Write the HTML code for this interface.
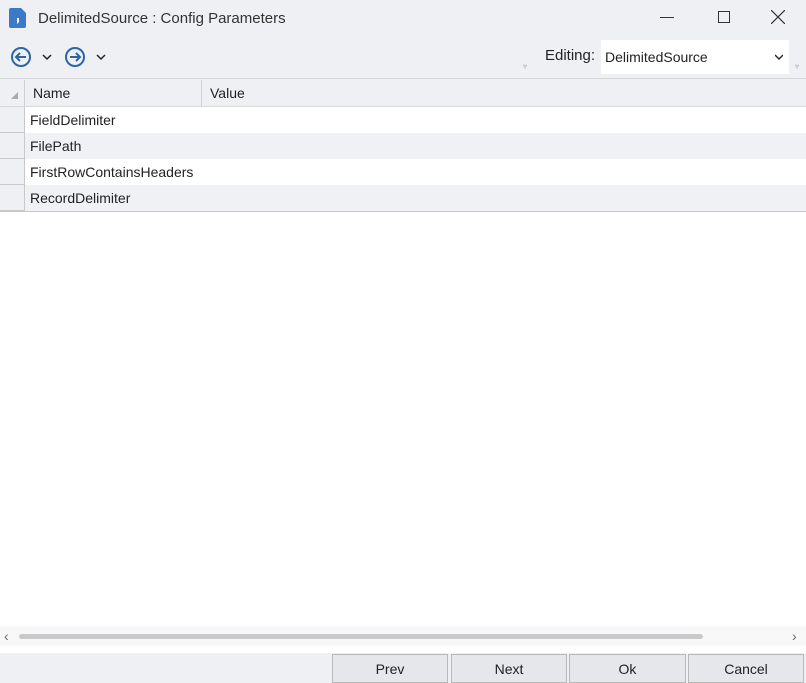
<!DOCTYPE html>
<html><head><style>
*{margin:0;padding:0;box-sizing:border-box}
body{width:806px;height:683px;background:#fff;font-family:"Liberation Sans",sans-serif;font-size:14px;color:#222;position:relative;overflow:hidden}
.abs{position:absolute}
.top{left:0;top:0;width:806px;height:79px;background:#eef0f3;border-bottom:1px solid #d4d6da}
.hdr{left:0;top:79px;width:806px;height:28px;background:#eef0f3;border-bottom:1px solid #d8d8d8}
.row{left:0;width:806px;height:26px;line-height:26px}
.rh{position:absolute;left:0;top:0;width:25px;height:26px;background:#eef0f3;border-right:1px solid #c8c8c8;border-bottom:1px solid #c8c8c8}
.row span{position:absolute;left:30px}
.btn{top:654px;height:29px;background:#e6e7ea;border:1px solid #b8b8b8;text-align:center;line-height:28px;font-size:14px}
</style></head><body>
<div class="abs top"></div>
<svg class="abs" style="left:9px;top:8px" width="18" height="20"><path d="M2 0h10l5 5v13a2 2 0 0 1-2 2H2a2 2 0 0 1-2-2V2a2 2 0 0 1 2-2z" fill="#3a7ac8"/><path d="M8 10h2v4l-2 2z" fill="#fff"/></svg>
<div class="abs" style="left:38px;top:10px;font-size:15px;color:#333">DelimitedSource : Config Parameters</div>
<div class="abs" style="left:660px;top:17px;width:14px;height:1px;background:#333"></div>
<div class="abs" style="left:718px;top:11px;width:12px;height:12px;border:1px solid #333"></div>
<svg class="abs" style="left:771px;top:10px" width="14" height="14"><path d="M0 0L14 14M14 0L0 14" stroke="#333" stroke-width="1.2"/></svg>
<svg class="abs" style="left:10px;top:46px" width="100" height="22"><circle cx="11" cy="11" r="9" fill="none" stroke="#2e64a8" stroke-width="2"/><path d="M16 11H7M10 7l-4 4 4 4" fill="none" stroke="#2e64a8" stroke-width="2"/><path d="M33 9l4 4 4-4" fill="none" stroke="#222" stroke-width="1.5"/><circle cx="65" cy="11" r="9" fill="none" stroke="#2e64a8" stroke-width="2"/><path d="M60 11h9M66 7l4 4-4 4" fill="none" stroke="#2e64a8" stroke-width="2"/><path d="M87 9l4 4 4-4" fill="none" stroke="#222" stroke-width="1.5"/></svg>
<div class="abs" style="left:523px;top:62px;font-size:8px;color:#999">▿</div>
<div class="abs" style="left:545px;top:47px;font-size:15px">Editing:</div>
<div class="abs" style="left:601px;top:40px;width:188px;height:34px;background:#fff;line-height:34px;padding-left:4px;font-size:14px">DelimitedSource<svg style="position:absolute;right:6px;top:14px" width="8" height="6"><path d="M0 1l4 4 4-4" fill="none" stroke="#222" stroke-width="1.4"/></svg></div>
<div class="abs" style="left:795px;top:62px;font-size:8px;color:#999">▿</div>
<div class="abs hdr"></div>
<div class="abs" style="left:24px;top:80px;width:1px;height:26px;background:#d0d0d0"></div>
<div class="abs" style="left:201px;top:80px;width:1px;height:26px;background:#d0d0d0"></div>
<div class="abs" style="left:11px;top:92px;width:0;height:0;border-left:7px solid transparent;border-bottom:7px solid #aaa"></div>
<div class="abs" style="left:33px;top:85px">Name</div>
<div class="abs" style="left:210px;top:85px">Value</div>
<div class="abs row" style="top:107px;background:#fff"><div class="rh"></div><span>FieldDelimiter</span></div>
<div class="abs row" style="top:133px;background:#f0f1f4"><div class="rh"></div><span>FilePath</span></div>
<div class="abs row" style="top:159px;background:#fff"><div class="rh"></div><span>FirstRowContainsHeaders</span></div>
<div class="abs row" style="top:185px;background:#f0f1f4"><div class="rh"></div><span>RecordDelimiter</span></div>
<div class="abs" style="left:0;top:211px;width:806px;height:1px;background:#c8c8c8"></div>
<div class="abs" style="left:0;top:626px;width:806px;height:20px;background:#f8f8f9"></div>
<div class="abs" style="left:4px;top:628px;font-size:14px;color:#666">‹</div>
<div class="abs" style="left:792px;top:628px;font-size:14px;color:#666">›</div>
<div class="abs" style="left:19px;top:634px;width:684px;height:5px;background:#c9c9cc;border-radius:3px"></div>
<div class="abs" style="left:0;top:653px;width:806px;height:30px;background:#eef0f3"></div>
<div class="abs btn" style="left:332px;width:116px">Prev</div>
<div class="abs btn" style="left:451px;width:116px">Next</div>
<div class="abs btn" style="left:569px;width:117px">Ok</div>
<div class="abs btn" style="left:688px;width:116px">Cancel</div>
</body></html>
